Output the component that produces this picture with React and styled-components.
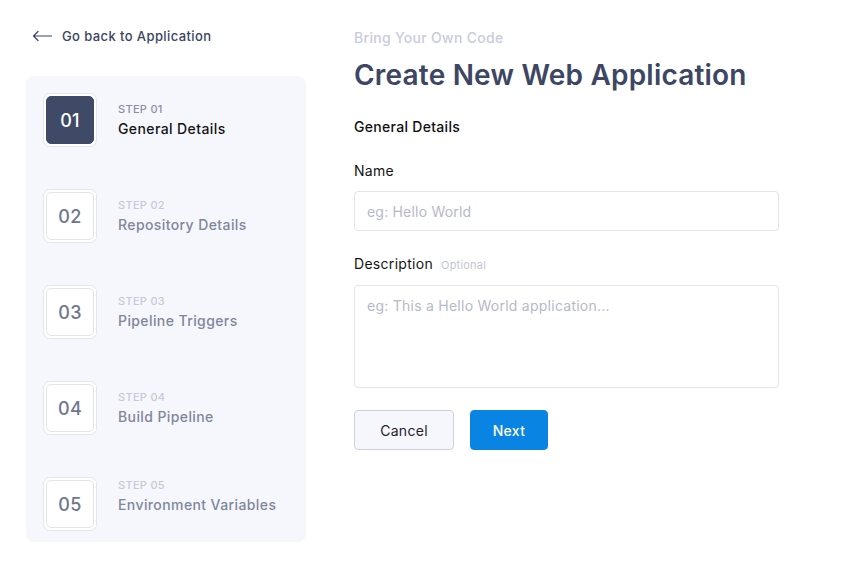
import React from "react";
import styled, { createGlobalStyle } from "styled-components";

const Global = createGlobalStyle`
  html, body { margin: 0; padding: 0; background: #ffffff; }
  body { font-family: Inter, "Open Sans", sans-serif; -webkit-font-smoothing: antialiased; }
  * { box-sizing: border-box; }
`;

const Page = styled.div`
  display: flex;
  gap: 48px;
  padding: 27px 0 0 26px;
  width: 852px;
  min-height: 577px;
`;

const LeftColumn = styled.div`
  width: 280px;
  display: flex;
  flex-direction: column;
`;

const BackLink = styled.a`
  display: flex;
  align-items: center;
  gap: 10px;
  height: 17px;
  padding-left: 6px;
  color: #3b4461;
  font-size: 13px;
  font-weight: 500;
  letter-spacing: 0.4px;
  text-decoration: none;
  cursor: pointer;
`;

const Sidebar = styled.nav`
  margin-top: 32px;
  background: #f6f7fc;
  border-radius: 8px;
  padding: 17px 17px 11px;
  display: flex;
  flex-direction: column;
  gap: 42px;
  height: 466px;
`;

const Step = styled.div`
  display: flex;
  align-items: center;
  gap: 21px;
`;

const StepBox = styled.div`
  width: 54px;
  height: 54px;
  flex: none;
  border: 1px solid #e4e6ee;
  border-radius: 7px;
  background: #ffffff;
  padding: 2px;
`;

const StepInner = styled.div`
  width: 100%;
  height: 100%;
  border-radius: 5px;
  display: flex;
  align-items: center;
  justify-content: center;
  font-size: 18px;
  font-weight: 500;
  letter-spacing: 0.3px;
  background: ${(p) => (p.$active ? "#3f4a67" : "#ffffff")};
  border: 1px solid ${(p) => (p.$active ? "#3f4a67" : "#e2e4ec")};
  color: ${(p) => (p.$active ? "#ffffff" : "#6f7590")};
`;

const StepText = styled.div`
  display: flex;
  flex-direction: column;
  gap: 4px;
  margin-bottom: ${(p) => (p.$raised ? "18px" : "2px")};
`;

const StepLabel = styled.span`
  font-size: 11px;
  font-weight: 500;
  letter-spacing: 0.3px;
  color: ${(p) => (p.$active ? "#8a8fa3" : "#c6c9d7")};
`;

const StepTitle = styled.span`
  font-size: 14px;
  font-weight: 500;
  letter-spacing: 0.4px;
  color: ${(p) => (p.$active ? "#141414" : "#80869c")};
`;

const Main = styled.main`
  width: 425px;
  display: flex;
  flex-direction: column;
`;

const Eyebrow = styled.div`
  font-size: 14px;
  font-weight: 500;
  letter-spacing: 0.3px;
  color: #c9ccda;
  height: 20px;
  display: flex;
  align-items: center;
`;

const Title = styled.h1`
  margin: 11px 0 0;
  font-size: 28px;
  font-weight: 600;
  letter-spacing: 0.2px;
  color: #3d4663;
  line-height: 34px;
`;

const Section = styled.h2`
  margin: 25px 0 0;
  font-size: 14px;
  font-weight: 500;
  letter-spacing: 0.3px;
  color: #111111;
  line-height: 20px;
`;

const Field = styled.div`
  display: flex;
  flex-direction: column;
  gap: 10px;
  margin-top: ${(p) => p.$top}px;
`;

const Label = styled.label`
  font-size: 14px;
  font-weight: 400;
  letter-spacing: 0.3px;
  color: #151515;
  line-height: 20px;
  display: flex;
  align-items: baseline;
  gap: 8px;
`;

const Optional = styled.span`
  font-size: 11px;
  letter-spacing: 0.2px;
  color: #c3c6d3;
`;

const Input = styled.input`
  width: 100%;
  height: 40px;
  border: 1px solid #e3e5ec;
  border-radius: 4px;
  padding: 0 12px;
  font-family: inherit;
  font-size: 14px;
  letter-spacing: 0.2px;
  color: #222;
  outline: none;
  &::placeholder { color: #b6b9c7; }
`;

const TextArea = styled.textarea`
  width: 100%;
  height: 103px;
  border: 1px solid #e3e5ec;
  border-radius: 4px;
  padding: 10px 12px;
  font-family: inherit;
  font-size: 14px;
  letter-spacing: 0.25px;
  line-height: 20px;
  resize: none;
  outline: none;
  &::placeholder { color: #b6b9c7; }
`;

const Actions = styled.div`
  display: flex;
  gap: 16px;
  margin-top: 22px;
`;

const Button = styled.button`
  height: 40px;
  width: ${(p) => p.$w}px;
  border-radius: 4px;
  font-family: inherit;
  font-size: 14px;
  letter-spacing: 0.3px;
  font-weight: ${(p) => (p.$primary ? 500 : 400)};
  cursor: pointer;
  background: ${(p) => (p.$primary ? "#0984e3" : "#f6f7fc")};
  color: ${(p) => (p.$primary ? "#ffffff" : "#1f2330")};
  border: 1px solid ${(p) => (p.$primary ? "#0984e3" : "#ccd0dc")};
`;

const steps = [
  { n: "01", title: "General Details" },
  { n: "02", title: "Repository Details" },
  { n: "03", title: "Pipeline Triggers" },
  { n: "04", title: "Build Pipeline" },
  { n: "05", title: "Environment Variables" },
];

export default function App() {
  return (
    <>
      <Global />
      <Page>
        <LeftColumn>
          <BackLink>
            <svg width="20" height="12" viewBox="0 0 20 12" fill="none">
              <path d="M19.5 6H1.5M1.5 6L6 1.5M1.5 6L6 10.5" stroke="#3b4461" strokeWidth="1.2" strokeLinecap="round" strokeLinejoin="round" />
            </svg>
            Go back to Application
          </BackLink>
          <Sidebar>
            {steps.map((s, i) => (
              <Step key={s.n}>
                <StepBox>
                  <StepInner $active={i === 0}>{s.n}</StepInner>
                </StepBox>
                <StepText $raised={i === steps.length - 1}>
                  <StepLabel $active={i === 0}>STEP {s.n}</StepLabel>
                  <StepTitle $active={i === 0}>{s.title}</StepTitle>
                </StepText>
              </Step>
            ))}
          </Sidebar>
        </LeftColumn>
        <Main>
          <Eyebrow>Bring Your Own Code</Eyebrow>
          <Title>Create New Web Application</Title>
          <Section>General Details</Section>
          <Field $top={24}>
            <Label>Name</Label>
            <Input placeholder="eg: Hello World" />
          </Field>
          <Field $top={23}>
            <Label>
              Description <Optional>Optional</Optional>
            </Label>
            <TextArea placeholder="eg: This a Hello World application..." />
          </Field>
          <Actions>
            <Button $w={100}>Cancel</Button>
            <Button $w={78} $primary>Next</Button>
          </Actions>
        </Main>
      </Page>
    </>
  );
}
